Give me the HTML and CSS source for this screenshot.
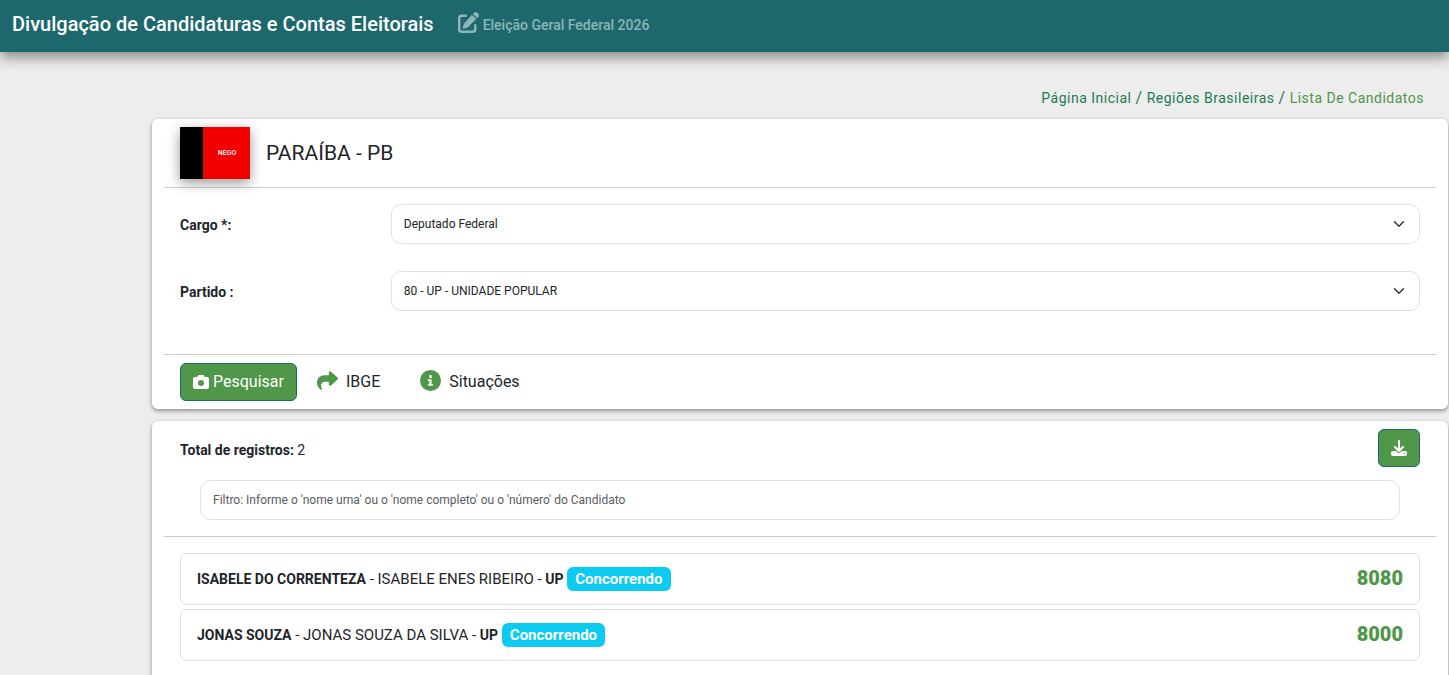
FILE: index.html
```html
<!DOCTYPE html>
<html lang="pt-BR">
<head>
<meta charset="utf-8">
<title>Divulgação de Candidaturas e Contas Eleitorais</title>
<link rel="stylesheet" href="styles.css">
</head>
<body>
<header class="topbar">
  <h1 class="brand">Divulgação de Candidaturas e Contas Eleitorais</h1>
  <a class="election" href="#">
    <svg class="election-icon" viewBox="0 0 512 512" aria-hidden="true"><path fill="currentColor" d="M362 46l30-30c22-21 56-21 78 0l26 26c21 22 21 56 0 78l-30 30zM340 68l104 104-196 196c-6 6-14 11-22 13l-76 24c-20 6-39-13-33-33l24-76c2-8 7-16 13-22z"/><path fill="none" stroke="currentColor" stroke-width="60" stroke-linecap="round" d="M190 92H94c-36 0-64 28-64 64v262c0 36 28 64 64 64h262c36 0 64-28 64-64V320"/></svg>
    <span>Eleição Geral Federal 2026</span>
  </a>
</header>

<main class="content">
  <nav class="breadcrumb" aria-label="Navegação">
    <a href="#">Página Inicial</a><span class="slash">/</span>
    <a href="#">Regiões Brasileiras</a><span class="slash">/</span>
    <span class="current">Lista De Candidatos</span>
  </nav>

  <section class="card">
    <div class="card-head">
      <svg class="flag" viewBox="0 0 70 52" role="img" aria-label="Bandeira da Paraíba"><path fill="#000" d="M0 0h24v52H0z"/><path fill="#f20000" d="M23 0h47v52H23z"/><text class="flag-text" x="47" y="28" text-anchor="middle">NEGO</text></svg>
      <h2 class="state">PARAÍBA - PB</h2>
    </div>
    <form class="fields">
      <label class="label" for="cargo">Cargo *:</label>
      <select class="select" id="cargo"><option>Deputado Federal</option></select>
      <label class="label" for="partido">Partido :</label>
      <select class="select" id="partido"><option>80 - UP - UNIDADE POPULAR</option></select>
    </form>
    <div class="actions">
      <button class="btn" type="button">
        <svg class="btn-icon" viewBox="0 0 512 512" aria-hidden="true"><path fill="currentColor" d="M149.100 64.800L138.700 96H64C28.700 96 0 124.700 0 160V416c0 35.300 28.700 64 64 64H448c35.300 0 64-28.700 64-64V160c0-35.300-28.700-64-64-64H373.300L362.900 64.800C356.400 45.200 338.100 32 317.400 32H194.600c-20.700 0-39 13.200-45.500 32.800zM256 192a96 96 0 1 1 0 192 96 96 0 1 1 0-192z"/></svg>
        <span>Pesquisar</span>
      </button>
      <a class="action" href="#">
        <svg class="action-icon" viewBox="0 0 512 512" aria-hidden="true"><path fill="currentColor" d="M307 34.800c-11.500 5.100-19 16.600-19 29.200v64H176C78.800 128 0 206.800 0 304C0 417.300 81.500 467.900 100.200 478.100c2.500 1.400 5.300 1.900 8.100 1.900c10.900 0 19.700-8.900 19.700-19.700c0-7.500-4.300-14.400-9.800-19.500C108.800 431.900 96 414.400 96 384c0-53 43-96 96-96h96v64c0 12.600 7.400 24.100 19 29.200s25 3 34.400-5.400l160-144c6.700-6.100 10.600-14.700 10.600-23.800s-3.800-17.700-10.600-23.800l-160-144c-9.400-8.500-22.900-10.600-34.400-5.400z"/></svg>
        <span>IBGE</span>
      </a>
      <a class="action" href="#">
        <svg class="action-icon" viewBox="0 0 512 512" aria-hidden="true"><circle cx="256" cy="256" r="256" fill="currentColor"/><path fill="#fff" d="M224 128h64v64h-64zM192 224h88v112h32v48H200v-48h32v-64h-40z"/></svg>
        <span>Situações</span>
      </a>
    </div>
  </section>

  <section class="card card-results">
    <div class="summary">
      <p class="total"><strong>Total de registros:</strong> 2</p>
      <button class="btn" type="button" aria-label="Baixar">
        <svg class="btn-icon" viewBox="0 0 512 512" aria-hidden="true"><path fill="currentColor" d="M288 32c0-17.700-14.300-32-32-32s-32 14.300-32 32V274.700l-73.400-73.400c-12.500-12.500-32.800-12.500-45.300 0s-12.500 32.800 0 45.300l128 128c12.500 12.500 32.800 12.500 45.300 0l128-128c12.500-12.500 12.500-32.800 0-45.300s-32.800-12.500-45.300 0L288 274.700V32zM64 352c-35.300 0-64 28.700-64 64v32c0 35.300 28.700 64 64 64H448c35.300 0 64-28.700 64-64V416c0-35.300-28.700-64-64-64H346.500l-45.300 45.300c-25 25-65.500 25-90.500 0L165.500 352H64zm368 56a24 24 0 1 1 0 48 24 24 0 1 1 0-48z"/></svg>
      </button>
    </div>
    <div class="filter">
      <input class="filter-input" type="text" aria-label="Filtro" placeholder="Filtro: Informe o 'nome urna' ou o 'nome completo' ou o 'número' do Candidato">
    </div>
    <ul class="candidates">
      <li class="candidate">
        <span class="person"><strong class="strong">ISABELE DO CORRENTEZA</strong> - ISABELE ENES RIBEIRO - <strong class="strong">UP</strong> <span class="badge">Concorrendo</span></span>
        <span class="number">8080</span>
      </li>
      <li class="candidate">
        <span class="person"><strong class="strong">JONAS SOUZA</strong> - JONAS SOUZA DA SILVA - <strong class="strong">UP</strong> <span class="badge">Concorrendo</span></span>
        <span class="number">8000</span>
      </li>
    </ul>
  </section>
</main>
</body>
</html>
```
FILE: styles.css
```css
* { box-sizing: border-box; }

html { height: 100%; }

body {
  display: flex;
  flex-direction: column;
  height: 100%;
  margin: 0;
  overflow: hidden;
  background: #ededed;
  color: #212529;
  font: 400 14px/24px Roboto, "Liberation Sans", sans-serif;
}

a { color: inherit; text-decoration: none; }

.topbar {
  display: flex;
  align-items: center;
  gap: 24px;
  padding: 8px 12px 12px;
  background: #1d686c;
  box-shadow: 0 6px 12px rgba(0, 0, 0, .4);
}

.brand {
  margin: 0;
  color: #fff;
  font-size: 20px;
  font-weight: 500;
  line-height: 32px;
}

.election {
  display: flex;
  align-items: center;
  gap: 4px;
  padding-top: 2px;
  color: #8eb5b7;
  font-weight: 500;
}

.election-icon { width: 21px; height: 21px; margin-bottom: 6px; }

.content {
  display: flex;
  flex: 1;
  flex-direction: column;
  gap: 12px;
  padding: 34px 1px 0 152px;
}

.breadcrumb {
  display: flex;
  justify-content: flex-end;
  gap: 4px;
  margin-bottom: -3px;
  padding-right: 24px;
  color: #1d7b55;
  letter-spacing: .5px;
}

.slash { font-size: 16px; }
.current { color: #509749; }

.card {
  padding: 0 12px;
  border-radius: 6px;
  background: #fff;
  box-shadow: 0 2px 4px rgba(0, 0, 0, .4);
}

.card-results { flex: 1 0 auto; border-radius: 6px 6px 0 0; }

.card-head {
  display: flex;
  align-items: center;
  gap: 16px;
  padding: 8px 16px;
  border-bottom: 1px solid #cbcccd;
}

.flag { width: 70px; height: 52px; box-shadow: 0 4px 12px rgba(0, 0, 0, .4); }
.flag-text { fill: #fff; font-size: 7px; font-weight: 500; }

.state { margin: 0; font-size: 21px; font-weight: 400; }

.fields {
  display: grid;
  grid-template-columns: 1fr 5fr;
  gap: 27px 5px;
  align-items: center;
  padding: 16px 16px 43px;
}

.label { padding-top: 2px; font-weight: 700; }

.select,
.filter-input {
  width: 100%;
  height: 40px;
  padding: 0 12px;
  border: 1px solid #dee2e6;
  border-radius: 10px;
  background-color: #fff;
  color: #212529;
  font: 400 12px/24px Roboto, "Liberation Sans", sans-serif;
}

.select {
  appearance: none;
  background-image: url("data:image/svg+xml,%3Csvg xmlns='http://www.w3.org/2000/svg' viewBox='0 0 16 16'%3E%3Cpath fill='none' stroke='%23343a40' stroke-linecap='round' stroke-linejoin='round' stroke-width='2' d='m2 5 6 6 6-6'/%3E%3C/svg%3E");
  background-repeat: no-repeat;
  background-position: right 14px center;
  background-size: 12px;
}

.filter-input::placeholder { color: #595c5f; opacity: 1; }

.actions {
  display: flex;
  align-items: center;
  padding: 8px 16px;
  border-top: 1px solid #cbcccd;
  font-size: 16px;
}

.btn {
  display: flex;
  align-items: center;
  gap: 4px;
  min-height: 38px;
  padding: 6px 12px;
  border: 1px solid #1d686c;
  border-radius: 6px;
  background: #509749;
  color: #fff;
  font: 400 16px/24px Roboto, "Liberation Sans", sans-serif;
}

.btn-icon { width: 16px; height: 16px; }

.action { display: flex; align-items: center; gap: 8px; margin-left: 20px; }
.action + .action { margin-left: 40px; }
.action-icon { width: 21px; height: 21px; margin-bottom: 4px; color: #509749; }

.summary {
  display: flex;
  align-items: center;
  justify-content: space-between;
  padding: 8px 16px 13px;
}

.total { margin: 4px 0 0; }

.filter { padding: 0 36px 16px; border-bottom: 1px solid #cbcccd; }

.candidates {
  display: grid;
  gap: 4px;
  margin: 0;
  padding: 16px;
  list-style: none;
}

.candidate {
  display: flex;
  align-items: center;
  justify-content: space-between;
  padding: 12px 16px;
  border: 1px solid #dee2e6;
  border-radius: 6px;
}

.person { font-size: 15px; line-height: 26px; }
.strong { font-size: 14px; }

.badge {
  display: inline-block;
  padding: 0 8px;
  border-radius: 6px;
  background: #0dcaf0;
  color: #fff;
  font-weight: 700;
  line-height: 24px;
}

.number { padding-bottom: 2px; color: #509749; font-size: 20px; font-weight: 900; }
```
